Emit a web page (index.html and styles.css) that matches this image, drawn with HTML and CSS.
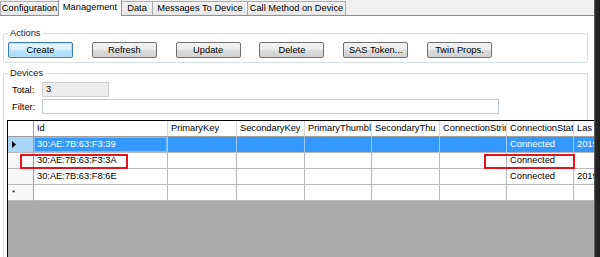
FILE: index.html
```html
<!DOCTYPE html>
<html>
<head>
<meta charset="utf-8">
<link rel="stylesheet" href="styles.css">
</head>
<body>
<div class="window">
  <div class="main">
    <div class="tabs">
      <div class="tab w-config">Configuration</div>
      <div class="tab active w-mgmt">Management</div>
      <div class="tab w-data">Data</div>
      <div class="tab w-msg">Messages To Device</div>
      <div class="tab w-call">Call Method on Device</div>
    </div>
    <div class="panel">
      <fieldset class="group actions">
        <legend>Actions</legend>
        <div class="btns">
          <button class="btn default">Create</button>
          <button class="btn">Refresh</button>
          <button class="btn">Update</button>
          <button class="btn">Delete</button>
          <button class="btn">SAS Token...</button>
          <button class="btn">Twin Props.</button>
        </div>
      </fieldset>
      <fieldset class="group devices">
        <legend>Devices</legend>
        <div class="field total-row"><span class="lbl">Total:</span><div class="box readonly">3</div></div>
        <div class="field filter-row"><span class="lbl">Filter:</span><div class="box filter"></div></div>
        <div class="dgv">
          <div class="grid">
            <div class="c hd rh"></div>
            <div class="c hd">Id</div>
            <div class="c hd">PrimaryKey</div>
            <div class="c hd">SecondaryKey</div>
            <div class="c hd">PrimaryThumbl</div>
            <div class="c hd">SecondaryThu</div>
            <div class="c hd">ConnectionStrin</div>
            <div class="c hd">ConnectionStat</div>
            <div class="c hd last">Las</div>

            <div class="c rh rh-sel"><svg class="arrow" width="4" height="7" viewBox="0 0 4 7"><path d="M0 0 L4 3.5 L0 7 Z" fill="#000"/></svg></div>
            <div class="c sel focus">30:AE:7B:63:F3:39</div>
            <div class="c sel"></div>
            <div class="c sel"></div>
            <div class="c sel"></div>
            <div class="c sel"></div>
            <div class="c sel"></div>
            <div class="c sel">Connected</div>
            <div class="c sel last">2019</div>

            <div class="c rh"></div>
            <div class="c">30:AE:7B:63:F3:3A</div>
            <div class="c"></div>
            <div class="c"></div>
            <div class="c"></div>
            <div class="c"></div>
            <div class="c"></div>
            <div class="c">Connected</div>
            <div class="c last"></div>

            <div class="c rh"></div>
            <div class="c">30:AE:7B:63:F8:6E</div>
            <div class="c"></div>
            <div class="c"></div>
            <div class="c"></div>
            <div class="c"></div>
            <div class="c"></div>
            <div class="c">Connected</div>
            <div class="c last">2019</div>

            <div class="c rh star">*</div>
            <div class="c"></div>
            <div class="c"></div>
            <div class="c"></div>
            <div class="c"></div>
            <div class="c"></div>
            <div class="c"></div>
            <div class="c"></div>
            <div class="c last"></div>
          </div>
          <div class="mark mark-id"></div>
          <div class="mark mark-state"></div>
        </div>
      </fieldset>
    </div>
  </div>
  <div class="edge"></div>
</div>
</body>
</html>
```
FILE: styles.css
```css
* { box-sizing: border-box; }
html, body {
  margin: 0;
  padding: 0;
  width: 600px;
  height: 257px;
  overflow: hidden;
  background: #ffffff;
  font-family: "Liberation Sans", Arial, sans-serif;
  font-size: 9.3px;
  color: #000;
}
.window {
  display: flex;
  width: 600px;
  height: 257px;
}
.main {
  flex: 1;
  min-width: 0;
  display: flex;
  flex-direction: column;
  background: #fff;
}
.edge {
  width: 6px;
  background: linear-gradient(90deg, #5a5a5a 0, #5a5a5a 1px, #2a2a2a 1px, #1e1e1e 100%);
}

/* tabs */
.tabs {
  display: flex;
  align-items: flex-end;
  height: 16px;
  border-bottom: 1px solid #8e9096;
  background: #f0f0f0;
  flex-shrink: 0;
}
.tab {
  height: 14px;
  border: 1px solid #a9abb0;
  border-bottom: none;
  margin-right: -1px;
  background: linear-gradient(#f4f4f4, #e6e6e6);
  text-align: center;
  line-height: 13px;
  white-space: nowrap;
  overflow: hidden;
}
.tab.active {
  height: 17px;
  margin-bottom: -1px;
  background: #fff;
  border-color: #8e9096;
  position: relative;
  z-index: 1;
  line-height: 14px;
}
.w-config { width: 59px; }
.w-mgmt { width: 64px; }
.w-data { width: 32px; }
.w-msg { width: 96px; }
.w-call { width: 99px; }

/* panel */
.panel {
  flex: 1;
  padding: 0 6px 0 3px;
  display: flex;
  flex-direction: column;
}
.group {
  margin: 0;
  padding: 0 4px;
  border: 1px solid #d5dfe5;
  border-radius: 3px;
  min-width: 0;
}
.group legend {
  padding: 0 2px;
  line-height: 11px;
  color: #1a1a1a;
}
.actions {
  margin-top: 12px;
  padding-top: 3px;
  padding-bottom: 4px;
}
.devices {
  margin-top: 5px;
  flex: 1;
  border-bottom: none;
}

/* buttons */
.btns {
  display: flex;
  gap: 18.8px;
}
.btn {
  width: 65px;
  height: 16px;
  padding: 0;
  margin: 0;
  border: 1px solid #707070;
  border-radius: 2px;
  background: linear-gradient(#f3f3f3 0%, #ebebeb 50%, #dddddd 51%, #d0d0d0 100%);
  font-family: "Liberation Sans", Arial, sans-serif;
  font-size: 9.3px;
  line-height: 14px;
  color: #000;
  text-align: center;
}
.btn.default {
  border-color: #3c7fb1;
  box-shadow: inset 0 0 0 1px #b6dff7;
  background: linear-gradient(#eaf6fd 0%, #d9f0fc 50%, #bee6fd 51%, #a7d9f5 100%);
}

/* fields */
.field {
  display: flex;
  align-items: center;
}
.lbl {
  width: 34px;
  padding-left: 4px;
}
.total-row { margin-top: 3px; }
.filter-row { margin-top: 2px; }
.box {
  height: 15px;
  border: 1px solid #c8ccd2;
  line-height: 13px;
  padding-left: 3px;
}
.box.readonly {
  width: 67px;
  background: #ececec;
  border-color: #cfcfcf;
}
.box.filter {
  width: 457px;
  height: 15px;
  background: #fff;
  border-color: #bfc9d4;
}

/* data grid */
.dgv {
  position: relative;
  margin-top: 6px;
  margin-left: -1px;
  margin-right: -11px;
  height: 140px;
  background: #ababab;
  border-top: 1px solid #000;
  border-left: 1px solid #000;
  overflow: hidden;
}
.grid {
  display: grid;
  grid-template-columns: 26px 134px 69px 68px 67px 68px 67px 67px 80px;
  grid-auto-rows: 16px;
  width: 646px;
}
.c {
  background: #fff;
  border-right: 1px solid #b9b9b9;
  border-bottom: 1px solid #b9b9b9;
  padding: 0 0 0 3px;
  line-height: 15px;
  font-size: 9.3px;
  white-space: nowrap;
  overflow: hidden;
}
.c.hd {
  border-right-color: #d8d8d8;
  border-bottom-color: #a0a0a0;
}
.c.rh {
  padding: 0;
  background: #f7f7f7;
  border-right-color: #a0a0a0;
  display: flex;
  align-items: center;
  justify-content: flex-start;
}
.c.hd.rh { background: #fff; }
.c.rh-sel { background: #a9d6f7; }
.arrow { margin-left: 4px; }
.c.star {
  padding-left: 4px;
  font-size: 8px;
  line-height: 15px;
}
.c.sel {
  background: #3399ff;
  color: #fff;
  border-right-color: #9ccbfa;
}
.c.focus {
  box-shadow: inset 0 0 0 1px #7dbbfb;
}

/* highlight marks */
.mark {
  position: absolute;
  border: 2px solid #e3141c;
  height: 15px;
  top: 33px;
}
.mark-id { left: 12px; width: 108px; }
.mark-state { left: 476px; width: 91px; }
```
